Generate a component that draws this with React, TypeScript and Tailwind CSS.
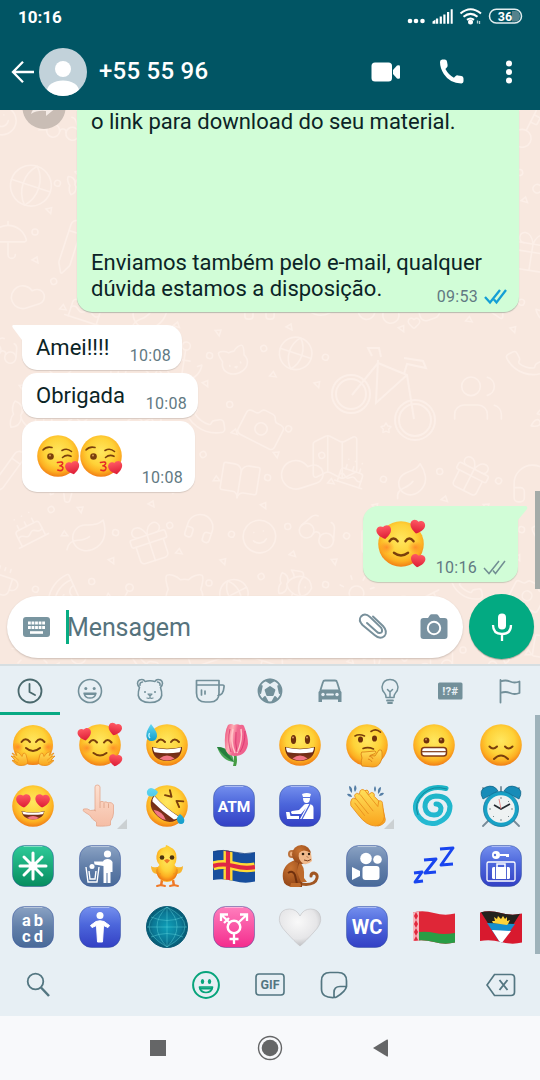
import React from "react";
import {
  Phone, Heart, Star, Pencil, Map as MapIcon, Cat, Cake, Umbrella, Users, Music, Plane, Camera, Coffee,
  Globe, Gift, Rocket, Sun, Pizza, Anchor, Smile, Headphones, BookOpen, Leaf, Fish, Glasses, Cloud, Key,
} from "lucide-react";

const doodles = [Smile, Plane, Cat, Cake, Phone, Glasses, Music, Globe, Leaf, Camera, Coffee, Rocket, Fish, Gift, Umbrella, Pizza, BookOpen, Sun, Headphones, Pencil, Anchor, Cloud, Key];

function Wallpaper() {
  const cells = [];
  for (let r = 0; r < 10; r++) {
    for (let c = 0; c < 10; c++) {
      const x = c * 58 - 14 + (r % 2) * 22;
      const y = r * 58 - 8 + ((c * 7) % 5) * 3;
      if (x > 285 && x < 475 && y > 205 && y < 335) continue;
      const Icon = doodles[(r * 7 + c * 5) % doodles.length];
      const size = 34 + ((r * 3 + c * 5) % 4) * 5;
      cells.push(
        <g key={r + "-" + c} transform={`rotate(${((r * 5 + c * 11) % 7) * 9 - 27} ${x + 20} ${y + 20})`}>
          <Icon x={x} y={y} size={size} strokeWidth={1.6} absoluteStrokeWidth />
          <circle cx={x + 49} cy={y + 14} r="3" />
          <path d={`M${x + 46} ${y + 42}l5-3 1 6z`} />
        </g>
      );
    }
  }
  return (
    <svg className="absolute inset-0 text-[#fcefe8]" width="540" height="554" fill="none" stroke="currentColor" strokeWidth="1.5">
      {cells}
      <g strokeWidth="2">
        <circle cx="351" cy="284" r="19" /><circle cx="351" cy="284" r="15" />
        <circle cx="415" cy="310" r="20" /><circle cx="415" cy="310" r="16" />
        <path d="m352 285 26-32 29 12 7 44M378 250l-2 43 31-28M372 246l-4-8h11l2 9M404 264l3-10 19 4-3-7-19-3" />
      </g>
      <Users x={450} y={260} size={56} strokeWidth={1.6} absoluteStrokeWidth />
      <Star x={380} y={312} size={12} strokeWidth={1.4} absoluteStrokeWidth />
      <MapIcon x={306} y={318} size={58} strokeWidth={1.6} absoluteStrokeWidth />
      <Heart x={407} y={206} size={14} strokeWidth={1.5} absoluteStrokeWidth />
    </svg>
  );
}

function Defs() {
  return (
    <svg width="0" height="0" className="absolute">
      <defs>
        <radialGradient id="face" cx=".5" cy=".4" r=".6">
          <stop offset="0" stopColor="#ffe75f" /><stop offset=".55" stopColor="#fed238" /><stop offset=".8" stopColor="#fdb022" /><stop offset="1" stopColor="#f17e15" />
        </radialGradient>
        <linearGradient id="blue" x2="0" y2="1"><stop stopColor="#7590ee" /><stop offset=".45" stopColor="#4c66db" /><stop offset="1" stopColor="#3340c4" /></linearGradient>
        <linearGradient id="slate" x2="0" y2="1"><stop stopColor="#8ba3c4" /><stop offset=".5" stopColor="#627fa9" /><stop offset="1" stopColor="#496a99" /></linearGradient>
        <linearGradient id="green" x2="0" y2="1"><stop stopColor="#2fca98" /><stop offset="1" stopColor="#068d5f" /></linearGradient>
        <linearGradient id="pink" x2="0" y2="1"><stop stopColor="#ff7fbd" /><stop offset="1" stopColor="#f42c8d" /></linearGradient>
        <linearGradient id="heart" x2="0" y2="1"><stop stopColor="#ff5963" /><stop offset="1" stopColor="#dd1c35" /></linearGradient>
        <linearGradient id="drop" x2="0" y2="1"><stop stopColor="#62d8f2" /><stop offset="1" stopColor="#149dcb" /></linearGradient>
        <linearGradient id="swirl" x2="0" y2="1"><stop stopColor="#1cb4c6" /><stop offset="1" stopColor="#25b9d2" /></linearGradient>
        <linearGradient id="hand" x2="0" y2="1"><stop stopColor="#ffe05a" /><stop offset="1" stopColor="#f9a31d" /></linearGradient>
        <linearGradient id="skin" x2="0" y2="1"><stop stopColor="#fde0d0" /><stop offset="1" stopColor="#f5bda5" /></linearGradient>
        <linearGradient id="mouth" x2="0" y2="1"><stop stopColor="#5b2010" /><stop offset="1" stopColor="#8a3a1c" /></linearGradient>
        <radialGradient id="white" cx=".45" cy=".35" r=".65"><stop stopColor="#f9f9f9" /><stop offset=".7" stopColor="#e6e6e8" /><stop offset="1" stopColor="#c0c1c4" /></radialGradient>
        <radialGradient id="globe"><stop stopColor="#0e9fb8" /><stop offset=".7" stopColor="#0b7895" /><stop offset="1" stopColor="#06566f" /></radialGradient>
        <linearGradient id="tulip" x2="1" y2=".3"><stop stopColor="#e83f73" /><stop offset=".35" stopColor="#ffb1b6" /><stop offset=".55" stopColor="#f16a90" /><stop offset="1" stopColor="#ef5f8c" /></linearGradient>
        <radialGradient id="brown" cx=".4" cy=".3" r=".8"><stop stopColor="#c97432" /><stop offset="1" stopColor="#8b3f13" /></radialGradient>
        <radialGradient id="blush"><stop stopColor="#ff6f23" stopOpacity=".65" /><stop offset="1" stopColor="#ff7d20" stopOpacity="0" /></radialGradient>
        <clipPath id="waveClip"><path d="M0 6.500Q10 4 21 7T42 7.500V36.500Q32 39 21 36T0 35Z" /></clipPath>
      </defs>
    </svg>
  );
}

type EmojiProps = { children: React.ReactNode; size?: number };
const E = ({ children, size = 42 }: EmojiProps) => (
  <svg width={size} height={size} viewBox="0 0 42 42" className="overflow-visible shrink-0" fill="none">{children}</svg>
);
const Face = () => <circle cx="21" cy="21" r="20.800" fill="url(#face)" />;
const HeartShape = ({ x, y, s = 1, r = 0 }: { x: number; y: number; s?: number; r?: number }) => (
  <path transform={`translate(${x} ${y}) rotate(${r}) scale(${s})`} d="M0 6.500C-4.500 4-7 1-6.700-2.200-6-6.200-1.800-6.200 0-4.500 1.800-6.200 6-6.200 6.700-2.200 7 1 4.500 4 0 6.500Z" fill="url(#heart)" />
);
const Brown = ({ d, w = 2 }: { d: string; w?: number }) => <path d={d} stroke="#7a3f0c" strokeWidth={w} strokeLinecap="round" strokeLinejoin="round" />;
const Tile = ({ fill, children }: { fill: string; children: React.ReactNode }) => (
  <E><rect x=".5" y=".5" width="41" height="41" rx="12" fill={fill} stroke="#2b4897" strokeOpacity=".45" /><path d="M12 1.500h18" stroke="#fff" strokeOpacity=".4" strokeLinecap="round" />{children}</E>
);
const TileText = ({ x, y, size, spacing = 0, children }: { x: number; y: number; size: number; spacing?: number; children: string }) => (
  <text x={x} y={y} fontSize={size} letterSpacing={spacing} textAnchor="middle" fontFamily="Roboto, sans-serif" fontWeight="700" fill="#fff">{children}</text>
);
const Grin = () => (
  <><path d="M6 23Q21 26.500 36 23C36 32 30 37 21 37S6 32 6 23Z" fill="url(#mouth)" /><path d="M7 23.500q14 3.300 28 0-.2 3.500-1.500 4.800-12.500 2-25 0Q7.200 27 7 23.500Z" fill="#fff" /><path d="M13.500 34.500Q21 28.500 28.500 34.500 21 38.500 13.500 34.500Z" fill="#f17683" /></>
);

const Adoring = ({ size }: { size?: number }) => (
  <E size={size}><Face /><ellipse cx="8" cy="24" rx="7" ry="6" fill="url(#blush)" /><ellipse cx="34" cy="24" rx="7" ry="6" fill="url(#blush)" />
    <Brown d="M10.500 18.500q3.500-5 7.500 0M25 18.500q3.500-5 7.500 0M14.500 29q6.500 5 13 0" w={2.1} />
    <HeartShape x={5.500} y={10} s={1} r={-10} /><HeartShape x={36} y={5} s={1} r={12} /><HeartShape x={36.500} y={36} s={0.98} r={8} /></E>
);
const Kiss = () => (
  <E><Face /><circle cx="13.500" cy="21.500" r="3.300" fill="#7a3f0c" /><circle cx="13" cy="20.500" r="1" fill="#d69a55" />
    <Brown d="M6 15q3.500-4 9-2.500M25 15.500q5-3 9.500 1M25.500 22.500q4-3.500 8.500-1.200" w={1.6} />
    <path d="M20.500 27.500q6-1.500 5 1.500-.8 1.800-3.200 1.800 4.500.4 3.500 3.200-1.200 2.700-5 1" stroke="#e52b25" strokeWidth="1.600" strokeLinecap="round" /><HeartShape x={35.500} y={32.500} s={1.05} r={-12} /></E>
);
const Hug = () => (
  <E><circle cx="21" cy="21" r="20" fill="url(#face)" /><ellipse cx="6" cy="23" rx="6" ry="5" fill="url(#blush)" /><ellipse cx="36" cy="23" rx="6" ry="5" fill="url(#blush)" />
    <Brown d="M9.500 18q4-5.500 8.500 0M24 18q4-5.500 8.500 0M14 24q7 6 14 0" w={2} />
    {[0, 1].map((i) => (
      <g key={i} transform={i ? "translate(42 0) scale(-1 1)" : undefined}>
        <path d="M13 41C5 43 3 39 0 36.500l3-.5-4-4 4 1-3-4 5 2.500-1.500-4q4 .5 6.500 5 .8-4 2.500-3.500 2 1 2.500 5.500Q17 40 13 41Z" fill="url(#hand)" stroke="#e98a18" strokeWidth=".8" strokeLinejoin="round" />
        <path d="m3 33 4 3.500M1.500 36.500 6 39" stroke="#e98a18" strokeWidth=".7" />
      </g>
    ))}
  </E>
);
const SweatGrin = () => (
  <E><Face /><Brown d="M11 18q3.500-5 8 0M25 18q3.500-5 8 0" /><Grin /><path d="M5 0Q12 9 11 12.500 10 17 5.500 17T.3 12Q0 7 5 0Z" fill="url(#drop)" /><path d="M3.500 9Q2 12 4 14" stroke="#bdf4ff" strokeWidth="1.300" /></E>
);
const Tulip = () => (
  <E><path d="M23 29q2 7 0 13h-3q2-8 0-13Z" fill="#459c43" /><path d="M21 38Q9 37 4 23q15 0 17 15Z" fill="#49a454" /><path d="M21 38Q10 32 4 23q7 0 9 4Z" fill="#267e3d" />
    <path d="M12 23Q11 8 15 1q3-2 6 0 3-1.500 6 0 3-1 4 1 4 10 4 18-2 12-13 12-9 0-10-9Z" fill="url(#tulip)" /><path d="M20 5q-3 12 2 24M28 5q2 11-4 24" stroke="#ffc6ca" strokeWidth="1.500" /><path d="M17 5q-3 12 1 23M32 7q0 14-5 21M23 8q-1 12 1 20" stroke="#d62867" strokeWidth=".7" /></E>
);
const Smiley = () => (
  <E><Face /><ellipse cx="14.500" cy="15.500" rx="2.600" ry="4.500" fill="#6f310b" /><ellipse cx="28.500" cy="15.500" rx="2.600" ry="4.500" fill="#6f310b" /><circle cx="14" cy="13.500" r="1" fill="#d89967" /><circle cx="28" cy="13.500" r="1" fill="#d89967" /><Grin /></E>
);
const Thinking = () => (
  <E><Face /><ellipse cx="14.500" cy="15.500" rx="2.500" ry="3.100" fill="#6f310b" /><ellipse cx="28.500" cy="14.500" rx="2.500" ry="3.100" fill="#6f310b" /><Brown d="M9 12q4-2.500 9.500 0M25 7.500q5-3.500 9.500.7M17 24.500q5-2 10.500.5" w={1.6} />
    <path d="M16 42c-1-2-1-5 0-8l-1-4q0-3 3-2l11-1q2 1 0 2.500l-5 2 5 .5 4-6q3-1 3 2 1 7-1.500 10-2 5-8 5Z" fill="url(#hand)" stroke="#dd871a" strokeWidth=".9" /><path d="M23 32q4 1 4 3M22 35q3 .5 4 3" stroke="#df861c" /></E>
);
const Grimace = () => (
  <E><Face /><circle cx="13.500" cy="16.500" r="2.900" fill="#6f310b" /><circle cx="28.500" cy="16.500" r="2.900" fill="#6f310b" /><circle cx="13" cy="15.500" r=".9" fill="#d89967" /><circle cx="28" cy="15.500" r=".9" fill="#d89967" /><rect x="8.500" y="23.500" width="25" height="8.500" rx="3" fill="#fff" stroke="#813b16" strokeWidth="1.500" /><path d="M9 27.700h24" stroke="#813b16" strokeWidth="1.200" /></E>
);
const Sad = () => (
  <E><Face /><Brown d="M9.500 22.500q3.500 4 7.500 0M25 22.500q3.500 4 7.500 0M14 35q7-7 14 0" w={2} /></E>
);
const HeartEyes = () => (
  <E><Face /><HeartShape x={11.500} y={15.500} s={1.08} r={-4} /><HeartShape x={30.500} y={15.500} s={1.08} r={4} /><path d="M9.500 26Q21 29 32.500 26 31 34.500 21 34.500T9.500 26Z" fill="url(#mouth)" /><path d="M10 26.500q11 2.500 22 0-.4 2-1.400 2.700-9.500 1-19.200 0Z" fill="#fff" /><path d="M15 33q6-4 12 0-6 3-12 0Z" fill="#f17683" /></E>
);
const PointUp = () => (
  <E><path d="M16 25V2q0-2 2.300-2T21 2v15q2-1.500 4 .2 2-1 4 .6 4-1 5.500 2.200V28q0 4-3 8v4q-3 1.500-14 1V37q-4-2-7-7l-5-3q-2-1-1-3 4-1 7 1.500Z" fill="url(#skin)" stroke="#e4a78d" strokeWidth=".8" /><path d="M21 17v6M25 18v5M29.500 18.500V23M17 26l-2-1" stroke="#dc9e84" strokeWidth=".8" /></E>
);
const Rofl = () => (
  <E><Face /><g transform="rotate(40 21 21)"><Brown d="m13 7 5.500 4-6 3M30.500 7 25 11l6 3" w={1.9} /><path d="M4 21Q21 24 38 21 37 35 21 35T4 21Z" fill="url(#mouth)" /><path d="M5 21.500q16 2.500 32 0-.3 4-2 5.500-14 1.500-28 0Q5 25 5 21.500Z" fill="#fff" /><path d="M13 32.500q8-5 16 0-8 4-16 0Z" fill="#f17683" /></g>
    <path d="M12 7q-2 5-7 4.500T1 6q2-4 6-2.500T12 7ZM34 29q-5 4-2 8.500 3 3 6 0 2-4-4-8.500Z" fill="url(#drop)" /></E>
);
const Clap = () => (
  <E><path d="M3 1q4 1 3 7-3-2-3-7ZM9 0q3 3 0 7-2-3 0-7ZM35 2q-4 1-3 7 3-2 3-7ZM29 1q-2 3 0 6 2-3 0-6ZM38 8q-4-1-5 3 4 0 5-3ZM1 9q4-1 5 3-4 0-5-3Z" fill="#557ea5" />
    <g transform="translate(3 2) scale(.93)"><path d="M9 19 17 4q3-2 4 1l-1 4 4-3q4 0 3 4l8 8 4 17q0 5-8 7L20 34Z" fill="url(#hand)" stroke="#e98c19" /><path d="M3 13q2-2 4 0L6 9q2-4 5-1l1-4q3-3 6 1l13 16 1-6q4-1 4 3l2 14q-1 8-9 10-10 0-19-12L2 20q-1-4 1-7Z" fill="url(#hand)" stroke="#e98c19" strokeWidth=".9" /><path d="m7 12 14 17M12 8l14 18M6 17l11 14" stroke="#e78b1b" strokeWidth=".9" /></g></E>
);
const Cyclone = () => (
  <E><path d="M33 3.500Q19 0 10 8-1 18 4 29q7 12 20 9 13-5 13-17-2-10-14-10-11 1-11 11 1 8 9 8 7 0 7-7-1-4-5-4" stroke="url(#swirl)" strokeWidth="5" strokeLinecap="round" /><path d="M34 4Q20 0 11 8 0 18 5 30" stroke="#14889d" strokeWidth="1" /></E>
);
const Clock = () => (
  <E><path d="m9 35-6 6M33 35l6 6M6 8 3 3M36 8l3-5M21 2v6" stroke="#778b99" strokeWidth="1.800" strokeLinecap="round" /><path d="M3 14Q-2 5 6 2q8-3 12 4ZM39 14q5-9-3-12-8-3-12 4Z" fill="#188cb8" stroke="#0b5e81" strokeWidth=".7" /><circle cx="21" cy="24" r="17.500" fill="#18a1c5" stroke="#0b6f96" strokeWidth=".7" /><circle cx="21" cy="24" r="13.800" fill="#eef2f2" /><path d="m14 20 7 4 9-5" stroke="#242b31" strokeWidth="1.700" /><path d="m21 24-2-10" stroke="#df7370" strokeWidth=".8" /><path d="M21 12v2M21 34v2M9 24h2M31 24h2M13 32l1-1M29 32l-1-1M29 16l-1 1" stroke="#75868b" /></E>
);
const Customs = () => (
  <Tile fill="url(#blue)"><path d="M23 9q5-2 9 0l-1 3h-7ZM24 13h7q0 5-3.500 5T24 13Z" fill="#fff" /><path d="M27 19h4q3.500 1 3.500 4v11H21l6-11-5 6h-9q-2-2 0-3l7-1 4-4q1-2 3-2ZM7 27h3.500l1 4H20v3H8Z" fill="#fff" /><path d="m31 19-8 15" stroke="#4c66db" strokeWidth="1.300" /></Tile>
);
const Asterisk = () => (
  <Tile fill="url(#green)"><path d="M21 8v26M8 21h26M12 12l18 18M30 12 12 30" stroke="#fff" strokeWidth="3" strokeLinecap="round" /><circle cx="21" cy="21" r="4.500" fill="#fff" /></Tile>
);
const Litter = () => (
  <Tile fill="url(#slate)"><circle cx="28.500" cy="9" r="3.600" fill="#fff" /><path d="M15 16.500h9q1-2.500 4.500-2.500t5 3V27h-2v11h-3V28h-1v10h-3V21l-9-1.500Z" fill="#fff" /><circle cx="13" cy="21.500" r="2.500" fill="#fff" /><path d="m7 22 2 15h9l2-15M10 26l1 8h5l1-8" stroke="#fff" strokeWidth="1.400" /></Tile>
);
const Chick = () => (
  <E><path d="m16 35-1 6M27 35l1 6" stroke="#ef7927" strokeWidth="2.500" /><path d="m11 41 4-1 4 1M24 41l4-1 4 1" stroke="#ef7927" strokeWidth="2" strokeLinecap="round" /><path d="M11 22q-4 1-6-1 0 7 6 8Q14 37 21 37t10-8q6-1 6-8-2 2-6 1Z" fill="#f8b62f" /><path d="M20 0q3 1 4 2 7 3 6.500 11 0 4-2 7 4 4 3 8-2 8-10.500 8T10.500 28q-1-4 3-8-5-5-2-13 2-4 8-5Z" fill="url(#face)" /><circle cx="16" cy="12.500" r="2.300" fill="#4c310f" /><circle cx="26" cy="12.500" r="2.300" fill="#4c310f" /><path d="M18 15.500q3-3 6 0l-3 3Z" fill="#ef7a27" /><path d="M11 24q0 5 4 5M31 24q0 5-4 5" stroke="#e89a20" /></E>
);
const Aland = () => (
  <E><g clipPath="url(#waveClip)"><path fill="#174e9d" d="M0 0h42v42H0z" /><path d="M15 3v36M0 21q10-3 21 0t21 1" stroke="#ffdb35" strokeWidth="9" /><path d="M15 3v36M0 21q10-3 21 0t21 1" stroke="#df2745" strokeWidth="4.200" /></g><path d="M0 6.500Q10 4 21 7T42 7.500" stroke="#103a7d" strokeWidth=".7" /></E>
);
const Monkey = () => (
  <E><path d="M22 39q14 2 16-6 1-4-3-5-3 0-3 3" stroke="#a15622" strokeWidth="3" strokeLinecap="round" /><path d="M16 15Q2 20 4 34q1 8 11 8h8l1-18Z" fill="url(#brown)" /><path d="M20 18q-1 10 3 16M9 28q5-3 7 2l2 9" stroke="#6f300e" strokeWidth="2" /><path d="M20 17q6 3 5 16l3 4h-6l-4-10M12 38h9q3 3-1 4h-9Z" fill="#be6b2d" /><circle cx="13" cy="9" r="4" fill="#bd723b" /><circle cx="13" cy="9" r="2.200" fill="#eaae7d" /><circle cx="22.500" cy="9.500" r="9.500" fill="url(#brown)" /><path d="M20 8q4-5 12 0l1 8q-4 4-8 3-7-4-5-11Z" fill="#f0b98b" /><circle cx="24" cy="9" r="1.300" fill="#312011" /><circle cx="30" cy="9" r="1.200" fill="#312011" /><path d="M25 15q4 2 7-.5M28 11.500l1 1" stroke="#7c401d" /></E>
);
const Cinema = () => (
  <Tile fill="url(#slate)"><circle cx="20" cy="13.500" r="5.800" fill="#fff" /><circle cx="31.500" cy="14.500" r="4.300" fill="#fff" /><rect x="16.500" y="21" width="17" height="14" rx="3" fill="#fff" /><path d="m6 22 8 4v5l-8 4Z" fill="#fff" /></Tile>
);
const Sleep = () => (
  <E><path d="m27 4 13-1-12 17 12-1M11 15l12-1-11 14 11-1M1 28l8-1-7 10 8-1" stroke="#1945ef" strokeWidth="2.900" strokeLinejoin="round" /></E>
);
const Locker = () => (
  <Tile fill="url(#blue)"><circle cx="16" cy="10" r="4" fill="#fff" /><circle cx="15" cy="10" r="1.200" fill="#5370db" /><path d="M20 9h9v3h-3v-1h-6Z" fill="#fff" /><rect x="7" y="17" width="28" height="19" rx="1.500" stroke="#fff" strokeWidth="1.300" /><rect x="12" y="22" width="18" height="12" rx="1.500" fill="#fff" /><path d="M17 22v-3h8v3" stroke="#fff" strokeWidth="1.500" /><path d="M15.500 22v12M26.500 22v12" stroke="#5267d2" /></Tile>
);
const Letters = () => <Tile fill="url(#slate)"><TileText x={22} y={20} size={16.5} spacing={3}>ab</TileText><TileText x={22} y={35.5} size={16.5} spacing={3}>cd</TileText></Tile>;
const Atm = () => <Tile fill="url(#blue)"><TileText x={21} y={26.500} size={15.500}>ATM</TileText></Tile>;
const Wc = () => <Tile fill="url(#blue)"><TileText x={21} y={28} size={20}>WC</TileText></Tile>;
const Person = () => <Tile fill="url(#blue)"><circle cx="21" cy="9.500" r="3.500" fill="#fff" /><path d="M17 15.500q4-1.500 8 0l5.500 4-1.500 2-4.500-2L23.500 36h-5L17.500 19.500l-4.500 2-1.500-2Z" fill="#fff" stroke="#fff" strokeLinejoin="round" /></Tile>;
const GlobeMesh = () => <E><circle cx="21" cy="21" r="20.500" fill="url(#globe)" stroke="#075a75" /><path d="M21 1v40M1 21h40M5 11q16 7 32 0M5 31q16-7 32 0M21 1Q1 20 21 41 41 20 21 1M21 1Q-15 20 21 41 57 20 21 1" stroke="#5ed5dd" strokeOpacity=".55" strokeWidth=".8" /></E>;
const Trans = () => <Tile fill="url(#pink)"><circle cx="21" cy="21" r="6.300" stroke="#fff" strokeWidth="2.500" /><path d="M17 17 8 8.500M8 15V8.500h7M11 17l5-5M25 17l9-8.500M27 8.500h7V15M21 27v11M16.500 33h9" stroke="#fff" strokeWidth="2.300" /></Tile>;
const WhiteHeart = () => <E><path d="M21 40Q16 36 7 26-1 18 .5 11 2 3 10.500 3q7 0 10.500 7Q24.500 3 31.500 3 40 3 41.500 11 43 18 35 26 26 36 21 40Z" fill="url(#white)" stroke="#c5c6c9" strokeWidth=".7" /></E>;
const Belarus = () => <E><g clipPath="url(#waveClip)"><path fill="#df2637" d="M0 0h42v42H0z" /><path d="M6 26q8-1 16 1t20 0v15H6Z" fill="#299d45" /><path fill="#f6b5bb" d="M0 0h6v42H0z" /><path d="m3 6 2 4-2 4 2 4-2 4 2 4-2 4 2 4-2 4-2-4 2-4-2-4 2-4-2-4 2-4-2-4Z" fill="#e1273c" /></g></E>;
const Antigua = () => <E><g clipPath="url(#waveClip)"><path fill="#d8192e" d="M0 0h42v42H0z" /><path d="M-1 3h44L21 38Z" fill="#25221e" /><path d="m7 17 28 1-14 20Z" fill="#168fce" /><path d="m12 24 19 1-10 13Z" fill="#fff" /><path d="m13 17-1-2 3 0-1-4 3 2 1-3 3 3 2-3 2 3 2-2v4l3-1-2 4-1 1Z" fill="#ffd43b" /></g></E>;

const emojis = [
  Hug, Adoring, SweatGrin, Tulip, Smiley, Thinking, Grimace, Sad,
  HeartEyes, PointUp, Rofl, Atm, Customs, Clap, Cyclone, Clock,
  Asterisk, Litter, Chick, Aland, Monkey, Cinema, Sleep, Locker,
  Letters, Person, GlobeMesh, Trans, WhiteHeart, Wc, Belarus, Antigua,
];

const Ic = ({ children, size = 28, className = "" }: { children: React.ReactNode; size?: number; className?: string }) => (
  <svg width={size} height={size} viewBox="0 0 28 28" className={className} fill="none" stroke="currentColor" strokeWidth="1.800" strokeLinecap="round" strokeLinejoin="round">{children}</svg>
);

const tabs = [
  <Ic><circle cx="14" cy="14" r="11.500" /><path d="M13.500 7v8l5.500 3" /></Ic>,
  <Ic><circle cx="14" cy="14" r="11.500" strokeWidth="1.600" /><circle cx="9.800" cy="11.500" r="1.500" fill="currentColor" stroke="none" /><circle cx="18.200" cy="11.500" r="1.500" fill="currentColor" stroke="none" /><path d="M8 16.300h12q-1 4.700-6 4.700t-6-4.700Z" strokeWidth="1.400" /><path d="M9 17.500h10" strokeWidth="1.200" /></Ic>,
  <Ic><path d="M3.500 10.500Q-.5 5.500 3.500 3q4-1.500 5.500 1.500 5-1.500 10 0Q20.500 1.500 24.500 3q4 2.500 0 7.500 1.500 4 1.200 8-1.200 7-11.700 7T2.300 18.500q-.3-4 1.200-8ZM4 8.200Q3.500 5.500 6.500 5M24 8.200Q24.500 5.500 21.500 5" strokeWidth="1.600" /><path d="M12 17h4l-2 2ZM14 19v1.500M11 21q2 1 3-.5 1 1.500 3 .5" strokeWidth="1.200" /><circle cx="9" cy="15" r="1" fill="currentColor" stroke="none" /><circle cx="19" cy="15" r="1" fill="currentColor" stroke="none" /></Ic>,
  <Ic className="overflow-visible"><path d="M.5 3.500h22.500V16q0 9-9 9H9.500q-9 0-9-9ZM.5 8H23M23 8h3.500q2 0 1.500 2-.5 8-6 8.500M5.500 13v5M9 14v3" strokeWidth="1.700" /></Ic>,
  <Ic><circle cx="14" cy="14" r="11.500" /><path d="m14 10 4.500 3-1.700 5h-5.600l-1.700-5ZM10 3.500q4-1.500 8 0L14 6ZM2.800 11.500l3-2.500-1.500 7ZM25.200 11.500l-3-2.500 1.500 7ZM7 22l2-2 2.500 4.500ZM21 22l-2-2-2.500 4.500Z" fill="currentColor" /></Ic>,
  <Ic><path d="M4.500 13 7 5q.3-1.500 2-1.500h10q1.700 0 2 1.500l2.500 8" /><path d="M4.500 12.500h19l2 2.500v10H22v-2.500H6V25H2.500V15Z" fill="currentColor" stroke="none" /><circle cx="7" cy="17.500" r="1.700" fill="#e7eff4" stroke="none" /><circle cx="21" cy="17.500" r="1.700" fill="#e7eff4" stroke="none" /><path d="M11 17.500h6" stroke="#e7eff4" /></Ic>,
  <Ic><path d="M10 20.500q0-3-1.500-4.500-2.500-2.500-2.500-6 1-7.500 8-7.500t8 7.500q0 3.500-2.500 6-1.500 1.500-1.500 4.500ZM11.500 12.500l2.500 2.500 2.500-2.500M14 15v5" strokeWidth="1.500" /><path d="M11 23.500h6M12 26h4" strokeWidth="1.800" /></Ic>,
  <Ic><rect x="2" y="5.500" width="24.500" height="17" rx="1.500" fill="currentColor" stroke="none" /><text x="14.200" y="18" fontSize="11.500" fontWeight="700" fontFamily="Roboto, sans-serif" textAnchor="middle" fill="#e7eff4" stroke="none">!?#</text></Ic>,
  <Ic><path d="M4.500 25.500V3M4.500 4.500q5-2 9.500 0t9.500 0V16q-5 2-9.500 0t-9.500 0" /></Ic>,
];

function Ticks({ color, w = 1.9 }: { color: string; w?: number }) {
  return <svg width="23" height="16" viewBox="0 0 23 16" fill="none" stroke={color} strokeWidth={w}><path d="m1 8 5 5.500L16 1M10 10.500l2.500 3L22 1" /></svg>;
}
const Time = ({ children, className = "" }: { children: string; className?: string }) => (
  <span className={`text-[16px] leading-[18px] tracking-[0.3px] text-[#617982] ${className}`}>{children}</span>
);

export default function App() {
  return (
    <div className="flex h-[1080px] w-[540px] flex-col overflow-hidden bg-[#f8e8df] font-['Roboto',sans-serif]">
      <Defs />
      <header className="h-[110px] shrink-0 bg-[#015564] text-white">
        <div className="flex h-[34px] items-center justify-between pl-[18px] pr-[16px]">
          <span className="pt-px text-[17px] font-bold">10:16</span>
          <svg width="117" height="20" viewBox="0 0 117 20" fill="none">
            <g fill="#fff"><circle cx="3" cy="14" r="2.300" /><circle cx="9" cy="14" r="2.300" /><circle cx="15.500" cy="14" r="2.300" /><path d="M25.500 14.500l3-2v4.300h-3ZM29 11.500h2.200v5.300h-2.200ZM32.700 9.500h2.200v7.300h-2.200ZM36.300 7.500h2.200v9.300h-2.200ZM40 5h2.200v11.800H40ZM43.700 2.300h2v14.500h-2Z" /><circle cx="63.500" cy="15" r="2.500" /></g>
            <path d="M53.500 6.500q10-8.500 20.500 0M56.500 9.800q7-5.700 14 0M60 12.800q3.500-2.600 7 0" stroke="#fff" strokeWidth="2.100" /><path d="M70.500 16.500v-3M72.500 14v3" stroke="#b7d0d3" strokeWidth="1.300" />
            <rect x="82.500" y="2.300" width="32" height="13.700" rx="6.800" stroke="#e3edef" strokeWidth="1.500" /><path d="M105 4h3.500q4 0 4.500 5.200-.5 5.200-4.500 5.200H105Z" fill="#54828c" /><text x="98" y="13.700" fontSize="12.500" fontWeight="700" textAnchor="middle" fill="#fff">36</text>
          </svg>
        </div>
        <div className="flex h-[75px] items-center pl-[11px]">
          <svg width="24" height="24" viewBox="0 0 24 24" fill="none" stroke="#fff" strokeWidth="2.300"><path d="M23 12H3M12 1.800 2 12l10 10.200" /></svg>
          <svg width="48" height="48" viewBox="0 0 48 48" className="ml-[4px]"><clipPath id="av"><circle cx="24" cy="24" r="24" /></clipPath><g clipPath="url(#av)"><path fill="#c2d2da" d="M0 0h48v48H0z" /><circle cx="24" cy="21" r="8" fill="#fff" /><ellipse cx="24" cy="43" rx="16" ry="10.500" fill="#fff" /></g></svg>
          <span className="ml-[12px] w-[260px] pb-px text-[24px] font-medium leading-[30px] tracking-[0.25px]">+55 55 96</span>
          <svg width="30" height="20" viewBox="0 0 30 20" className="ml-[12px]" fill="#fff"><rect x=".5" y=".5" width="20.500" height="19" rx="3.500" /><path d="m22 8 4-4.500q3-1 3 1v11q0 2-3 1L22 12Z" /></svg>
          <svg width="25" height="25" viewBox="0 0 25 25" className="ml-[38px]" fill="#fff"><path d="M3.200.5h2.500q2 0 2.300 2L8.600 6q.2 1.500-.8 2.500L6.400 10q3 5.700 8.500 8.700l1.500-1.500q1-1 2.500-.8l3.600.7q2 .4 2 2.300v2.800q0 2-2 2.200Q11 24.500 4.800 15 1 9 1 3 1 .7 3.200.5Z" /></svg>
          <svg width="8" height="24" viewBox="0 0 8 24" className="ml-[41px]" fill="#fff"><circle cx="4" cy="3.500" r="3" /><circle cx="4" cy="12" r="3" /><circle cx="4" cy="20.500" r="3" /></svg>
        </div>
      </header>

      <main className="relative flex h-[554px] shrink-0 flex-col overflow-hidden text-[22px] leading-[26px] text-[#0b2426]">
        <Wallpaper />
        <svg className="absolute left-[22px] top-[-24px]" width="44" height="44" viewBox="0 0 44 44"><circle cx="22" cy="21.500" r="21.500" fill="#c9bdb5" /><path d="M9 28q3-10 15-10v-7l11 10-11 9v-5Q15 24 9 28Z" fill="#f4ebe6" /></svg>
        <section className="relative ml-[77px] h-[202px] w-[442px] shrink-0 rounded-b-[15px] bg-[#d1fdd7] px-[14px] shadow-[0_1px_1px_#b7b9ad]">
          <p className="whitespace-nowrap leading-[24px]">o link para download do seu material.</p>
          <p className="mt-[116px] whitespace-nowrap">Enviamos também pelo e-mail, qualquer<br />dúvida estamos a disposição.</p>
          <div className="absolute bottom-[6px] right-[12px] flex items-center gap-[6px]"><Time>09:53</Time><Ticks color="#159fd5" w={2.3} /></div>
        </section>
        <section className="relative ml-[22px] mt-[13px] flex h-[45px] w-[160px] shrink-0 items-end justify-between rounded-[15px] rounded-tl-none bg-white pb-[6px] pl-[14px] pr-[11px] shadow-[0_1px_1px_#d7c9c1]">
          <svg className="absolute left-[-10px] top-0" width="12" height="16" viewBox="0 0 12 16"><path d="M12 0H1Q-.5 1 1 3l9 12 2 1Z" fill="#fff" /></svg>
          <span className="pb-[3px]">Amei!!!!</span><Time className="mb-[-1px]">10:08</Time>
        </section>
        <section className="relative ml-[22px] mt-[3px] flex h-[45px] w-[176px] shrink-0 items-end justify-between rounded-[15px] bg-white pb-[5px] pl-[14px] pr-[11px] shadow-[0_1px_1px_#d7c9c1]">
          <span className="pb-[4px]">Obrigada</span><Time>10:08</Time>
        </section>
        <section className="relative ml-[22px] mt-[3px] flex h-[71px] w-[173px] shrink-0 items-end justify-between rounded-[15px] bg-white pb-[5px] pl-[15px] pr-[12px] shadow-[0_1px_1px_#d7c9c1]">
          <div className="flex gap-px pb-[10px]"><Kiss /><Kiss /></div><Time>10:08</Time>
        </section>
        <section className="relative ml-[363px] mt-[14px] flex h-[76px] w-[155px] shrink-0 rounded-[15px] rounded-tr-none bg-[#d1fdd7] pl-[15px] pt-[15px] shadow-[0_1px_1px_#c9c7b7]">
          <svg className="absolute left-[153px] top-0" width="12" height="16" viewBox="0 0 12 16"><path d="M0 0h10q2 1 1 3L2 14l-2 2Z" fill="#d1fdd7" /></svg>
          <Adoring size={46} />
          <div className="absolute bottom-[5px] right-[12px] flex items-center gap-[6px]"><Time>10:16</Time><Ticks color="#728e93" w={1.5} /></div>
        </section>
        <div className="relative mt-[12px] flex shrink-0 items-center pl-[7px]">
          <div className="flex h-[62px] w-[456px] items-center rounded-full bg-white pl-[16px] shadow-[0_1px_2px_#cdbdb4]">
            <svg width="27" height="20" viewBox="0 0 27 20"><rect width="27" height="20" rx="3" fill="#7995a0" /><path d="M5 6h17M5 10.500h17" stroke="#fff" strokeWidth="3" strokeDasharray="2.800 .75" /><path d="M7 15.500h13" stroke="#fff" strokeWidth="2.600" /></svg>
            <span className="ml-[16px] h-[34px] w-[3px] bg-[#08ad83]" />
            <span className="ml-[-2px] w-[290px] pt-[3px] text-[25px] leading-[34px] tracking-[-0.1px] text-[#56737d]">Mensagem</span>
            <svg width="31" height="28" viewBox="0 0 31 28" className="ml-px overflow-visible" fill="none" stroke="#78909b" strokeWidth="1.900" strokeLinecap="round"><path d="M15 3.500 25 13q5 5.500 1.500 10-4.500 4-10-1L4.500 12Q0 7 3 3.500 7-.5 12 4l11 10.500q2 3 .5 5-2.500 1.500-5-1L9 10" /></svg>
            <svg width="28" height="26" viewBox="0 0 28 26" className="ml-[31px]"><path d="M3.500 4H8l2-3q.5-.7 1.500-.7h5q1 0 1.500.7l2 3h4.500q3 0 3 3v15q0 3-3 3h-21q-3 0-3-3V7q0-3 3-3Z" fill="#7891a0" /><circle cx="14" cy="14" r="6.200" fill="none" stroke="#fff" strokeWidth="2" /></svg>
          </div>
          <div className="ml-[6px] flex size-[65px] items-center justify-center rounded-full bg-[#03aa82] shadow-[0_1px_1px_#b2a89d]">
            <svg width="22" height="30" viewBox="0 0 22 30" fill="none" stroke="#fff" strokeWidth="2.300"><rect x="7" y="1.500" width="8" height="16" rx="4" fill="#fff" stroke="none" /><path d="M2 13q0 9 9 9t9-9M11 22v7" /></svg>
          </div>
        </div>
        <div className="absolute right-0 top-[381px] h-[98px] w-[5px] bg-[#a4aba8]" />
      </main>

      <div className="flex h-[352px] shrink-0 flex-col border-t-2 border-[#d6dee1] bg-[#e7eff4]">
        <nav className="grid h-[49px] shrink-0 grid-cols-9 text-[#73909a]">
          {tabs.map((tab, i) => (
            <div key={i} className={i === 0 ? "flex items-center justify-center border-b-[3px] border-[#08aa84] pt-[3px] text-[#49686c]" : "flex items-center justify-center"}>{tab}</div>
          ))}
        </nav>
        <div className="flex h-[242px] shrink-0">
          <div className="grid w-[534px] grid-cols-8 grid-rows-4">
            {emojis.map((Emoji, i) => (
              <div key={i} className="relative flex items-center justify-center">
                <Emoji />
                {(i === 9 || i === 13) && <svg className="absolute bottom-[7px] right-[7px]" width="10" height="10"><path d="M10 0v10H0Z" fill="#cbd0d2" /></svg>}
              </div>
            ))}
          </div>
          <div className="ml-px h-[239px] w-[5px] bg-[#9eb2ba]" />
        </div>
        <div className="flex min-h-0 flex-1 items-center pb-[4px] text-[#537681]">
          <svg width="24" height="26" viewBox="0 0 24 26" className="ml-[26px]" fill="none" stroke="currentColor"><circle cx="9.500" cy="9.500" r="7.800" strokeWidth="1.800" /><path d="m15 15.500 8 8.500" strokeWidth="2.500" /></svg>
          <Ic className="ml-[142px] text-[#07a47b]"><circle cx="14" cy="14" r="12.900" strokeWidth="2" /><ellipse cx="10.500" cy="10.500" rx="1.700" ry="2.500" fill="currentColor" stroke="none" /><ellipse cx="17.500" cy="10.500" rx="1.700" ry="2.500" fill="currentColor" stroke="none" /><path d="M7.500 16h13q-1 5.500-6.500 5.500T7.500 16Z" strokeWidth="1.700" /><path d="M8 17.500h12" strokeWidth="2" /></Ic>
          <svg width="30" height="23" viewBox="0 0 30 23" className="ml-[35px]" fill="none" stroke="currentColor"><rect x="1" y="1" width="28" height="21" rx="3" strokeWidth="1.600" /><text x="15" y="15.700" fontSize="12.500" fontWeight="700" textAnchor="middle" fill="currentColor" stroke="none">GIF</text></svg>
          <svg width="28" height="28" viewBox="0 0 28 28" className="ml-[35px]" fill="none" stroke="currentColor" strokeWidth="1.700"><path d="M14 26.500Q1.500 27 1.500 18v-8q0-8.500 8.500-8.500h8q8.500 0 8.500 8.500v5.500q-1 5-10 10.500-1 .5-2.500.5v-5q0-6 6-6h6" /></svg>
          <svg width="30" height="24" viewBox="0 0 30 24" className="ml-[138px]" fill="none" stroke="currentColor" strokeWidth="1.700"><path d="M8.500 1.500H25q3.500 0 3.500 3.500v14q0 3.500-3.500 3.500H8.500L1 12Z" /><path d="m13.500 7 8 10M21.500 7l-8 10" strokeWidth="1.900" /></svg>
        </div>
      </div>
      <footer className="flex h-[64px] shrink-0 items-center bg-[#f8f9fb]">
        <span className="ml-[150px] size-[16px] bg-[#656667]" />
        <svg width="26" height="26" viewBox="0 0 26 26" className="ml-[91px]"><circle cx="13" cy="13" r="11.500" fill="none" stroke="#656667" strokeWidth="1.400" /><circle cx="13" cy="13" r="8.300" fill="#656667" /></svg>
        <svg width="17" height="20" viewBox="0 0 17 20" className="ml-[89px]"><path d="M1 10 15 1.500q1-.5 1 1v15q0 1.500-1 1Z" fill="#656667" /></svg>
      </footer>
    </div>
  );
}
